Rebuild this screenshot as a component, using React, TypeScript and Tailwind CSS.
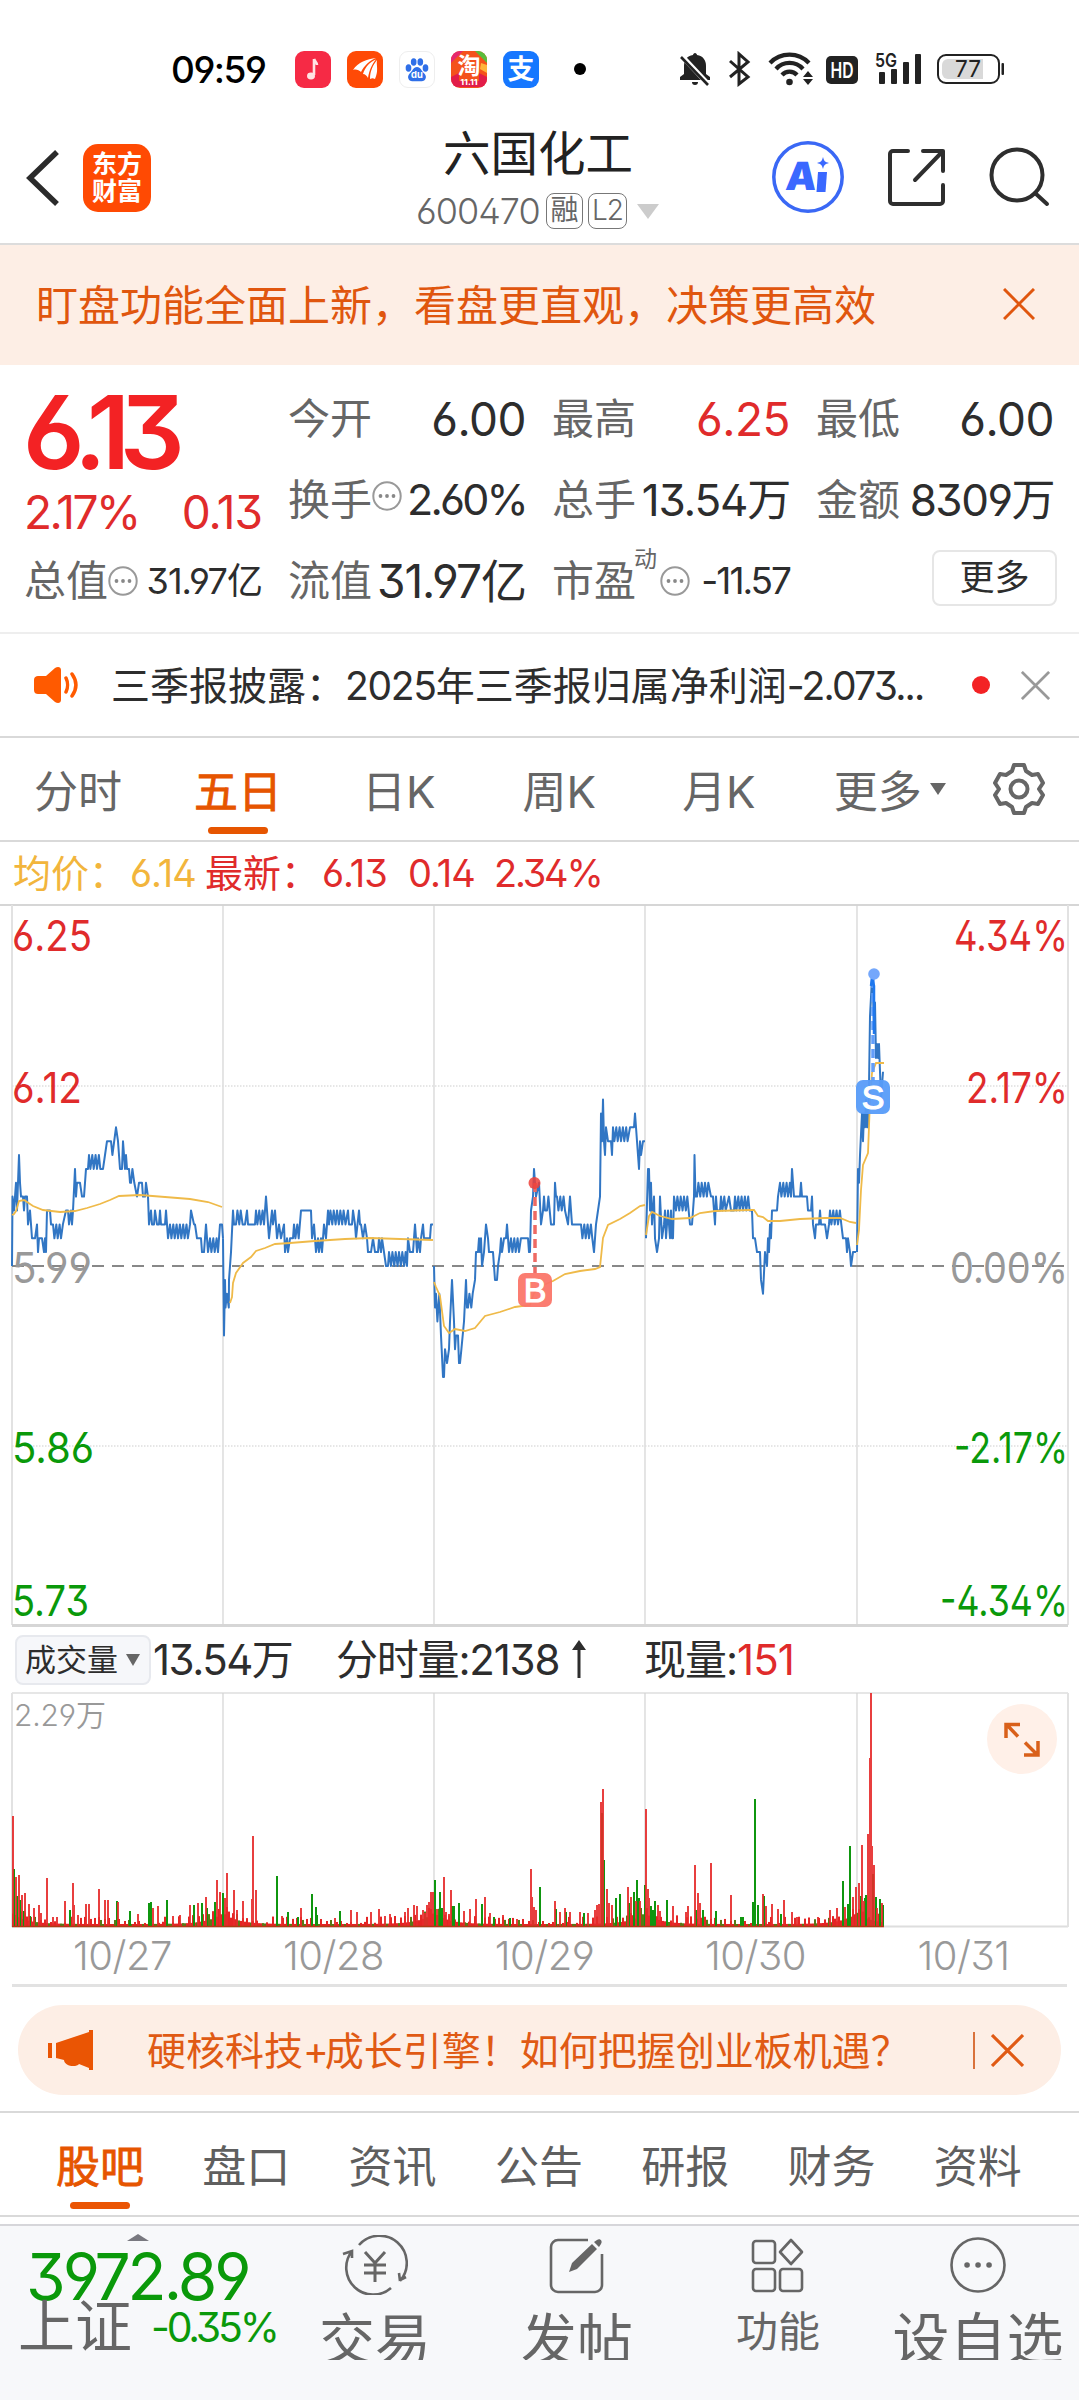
import type { ReactNode } from "react";

type Point = [number, number];

const PRICE_BASE = 362;
const TICK = 13.87;

// flips between two price ticks for every sample in [from, to]
function swing(from: number, to: number, a: number, b: number): Point[] {
  const points: Point[] = [];
  let high = false;
  for (let x = from; x <= to; x += high ? 1.4 : 1.9) {
    points.push([x, high ? b : a]);
    high = !high;
  }
  return points;
}

const priceDays: Point[][] = [
  [
    [12, 0], [12.5, 5], [14, 4], [15, 5], [16, 6], [17, 4], [18, 6], [19, 8], [20, 6], [21, 5], [23, 5], [24, 4], [25, 5], [27, 5], [28, 3], [30, 4], [32, 2], [35, 2], [37, 3], [38, 1], [39, 2], [42, 2], [44, 1], [45, 2], [46, 1], [47, 4], [50, 4], [51, 3],
    ...swing(53, 64, 3, 2),
    [66, 4], [68, 4], [69, 3], [71, 4], [72, 3], [73, 4], [75, 7], [76, 5], [77, 6], [80, 6], [82, 5], [84, 5], [86, 7], [88, 7],
    ...swing(89, 101, 8, 7),
    [103, 7], [105, 8], [107, 9], [110, 9],
    ...swing(111, 114, 9, 8),
    [116, 10], [118, 9], [120, 7], [122, 7], [123, 9], [125, 7], [126, 8], [127, 7], [129, 7], [130, 6],
    ...swing(131, 135, 6, 7),
    [137, 5], [139, 6], [142, 6], [143, 5], [145, 5], [146, 6], [148, 5], [149, 3], [151, 4], [152, 3], [154, 3], [155, 4], [157, 3], [159, 3], [160, 4], [161, 3], [165, 3], [166, 4], [168, 2],
    ...swing(170, 188, 3, 2),
    [190, 3], [191, 4], [194, 3], [195, 3], [197, 2], [201, 2], [202, 1], [204, 1], [206, 3], [208, 1],
    ...swing(210, 219, 2, 1),
    [220, 3], [222, 3], [223, 2],
  ],
  [
    [223, 2], [224, -5], [225, -1],
    ...swing(225.5, 229, -3, -2),
    [229, -1], [230, 0], [231, 1], [233, 4], [234, 3],
    ...swing(236, 243, 3, 4),
    [245, 3], [247, 4], [248, 3], [255, 3],
    ...swing(256, 264, 4, 3),
    [266, 5], [268, 3], [269, 2], [272, 4], [273, 3], [275, 4], [277, 2], [279, 3], [281, 2], [284, 3], [285, 1], [287, 2], [288, 1], [290, 2], [293, 2],
    ...swing(294, 299, 3, 2),
    [301, 4], [311, 4], [312, 2], [314, 3], [316, 1], [318, 2], [319, 1], [321, 2], [322, 1], [324, 3], [326, 2], [328, 4],
    ...swing(329, 346, 3, 4),
    [348, 4], [349, 3], [352, 3], [353, 4], [355, 3], [356, 2], [359, 4], [360, 3], [361, 3], [363, 2], [365, 3], [367, 2], [368, 1], [371, 1], [373, 2], [375, 1], [378, 1], [379, 2], [381, 1], [382, 2], [384, 1], [386, 0], [388, 0], [389, 1],
    ...swing(391, 406, 0, 1),
    [407, 0], [408, 2], [410, 1], [413, 1], [415, 3], [417, 1], [418, 2], [420, 1], [421, 2], [423, 3], [424, 2], [430, 2], [431, 3], [433, 3],
  ],
  [
    [434, 0], [435, -3],
    ...swing(436, 440, -2, -4),
    [441, -5], [443, -8], [444, -8], [445, -6], [447, -7], [449, -6], [450, -4], [452, -1], [454, -4], [455, -6], [456, -5], [458, -5], [459, -7],
    ...swing(460, 463, -7, -6),
    [464, -4], [466, -1], [467, -3],
    ...swing(468, 474, -3, -2),
    [475, -1], [476, 1], [478, 1], [479, 2], [480, 1], [481, 2], [482, 0], [484, 1], [486, 3], [488, 2], [489, 1], [493, 1], [495, -1], [497, -1], [498, 0], [500, 1], [501, 2], [502, 1], [504, 2], [506, 2], [507, 3], [509, 1],
    ...swing(511, 522, 2, 1),
    [528, 2], [529, 1], [530, 1], [531, 4], [533, 5], [534, 7], [536, 5], [539, 6], [541, 3], [543, 4], [544, 5], [545, 4],
    ...swing(547, 550, 4, 5),
    [551, 3], [554, 3], [555, 6], [556, 5],
    ...swing(557, 566, 5, 4),
    [568, 3], [570, 5], [572, 3], [580, 3],
    ...swing(581, 593, 3, 2),
    [594, 1], [596, 3], [598, 4], [600, 5], [601, 11], [602, 9], [603, 12], [604, 9], [605, 8], [606, 10], [608, 9], [611, 9], [612, 8],
    ...swing(613, 629, 10, 9),
    [630, 10], [634, 10], [635, 11], [636, 10], [637, 9], [639, 7], [640, 9], [641, 8], [643, 9], [645, 9],
  ],
  [
    [646, 2], [648, 7], [649, 7], [650, 4], [651, 6], [652, 3], [654, 5], [655, 2], [657, 1], [659, 2], [660, 5], [662, 2], [664, 3], [665, 4], [666, 2], [668, 4], [669, 3], [670, 2], [671, 4], [672, 2], [673, 2], [674, 5],
    ...swing(676, 688, 4, 5),
    [690, 3], [692, 3], [693, 4], [694, 5], [694.5, 8], [695.5, 5],
    ...swing(697, 710, 5, 6),
    [711, 5], [713, 5], [715, 3], [716, 5], [717, 4], [720, 4],
    ...swing(721, 727, 5, 4),
    [729, 5], [731, 4], [734, 4],
    ...swing(735, 750, 5, 4),
    [752, 4], [753, 2], [755, 2], [757, 1], [760, 1], [761, -1], [763, -2], [765, 1], [767, 0], [768, 2], [769, 1], [770, 3], [771, 2], [772, 4], [777, 4], [778, 5],
    ...swing(780, 790, 6, 5),
    [791, 5], [792, 7], [794, 5], [800, 5], [801, 6], [802, 5], [807, 5], [808, 4], [811, 4], [812, 5], [813, 3], [815, 2], [816, 3], [819, 3], [820, 4], [821, 3], [825, 3], [827, 2], [829, 3],
    ...swing(830, 842, 4, 3),
    [843, 2], [846, 2], [847, 1], [848, 2], [850, 1], [851, 0], [853, 1], [856, 1],
  ],
  [
    [857, 1], [858, 7], [859, 6], [860, 8], [862, 11], [863, 9], [864, 11], [865, 10], [866, 12], [867, 10], [868, 10], [869, 13], [870, 18], [872, 20.8], [873, 20], [874, 17], [875, 19], [876, 15], [877, 16], [878, 15], [879, 16], [880, 14], [881, 12], [882, 13], [883, 14],
  ],
];

const averageLines = [
  "12,1215 14,1214 16,1211 19,1201 24,1200 33,1206 43,1210 60,1212 75,1211 87,1208 100,1204 110,1200 119,1196 140,1195 165,1197 190,1199 208,1202 222,1207",
  "230,1303 232,1297 233,1283 236,1273 243,1263 251,1257 256,1251 265,1248 275,1244 290,1243 315,1241 345,1239 370,1238 400,1239 433,1240",
  "434,1282 436,1287 440,1296 444,1326 449,1333 455,1329 465,1331 475,1328 485,1316 500,1312 515,1307 530,1305 534,1293 540,1287 548,1283 553,1281 565,1274 580,1271 595,1269 600,1267 603,1238 608,1225 620,1219 630,1213 640,1206 645,1205",
  "646,1235 649,1216 652,1212 660,1216 672,1219 690,1218 700,1213 715,1211 750,1210 754,1210 758,1216 763,1217 768,1221 780,1221 800,1219 825,1218 840,1218 850,1222 856,1223",
  "857,1245 859,1230 861,1190 863,1165 868,1153 870,1100 872,1073 876,1063 884,1063",
];

const upBars: Point[] = [
  [13, 110], [16, 49], [19, 51], [22, 31], [25, 33], [29, 22], [34, 18], [39, 21], [41, 13], [47, 48], [53, 9], [57, 9], [65, 25], [73, 43], [74, 21], [78, 11], [86, 22], [89, 22], [99, 37], [105, 26], [108, 26], [118, 24], [138, 12], [153, 18], [158, 20], [173, 10], [180, 11], [190, 21], [198, 23], [206, 29], [217, 46], [220, 34], [225, 28], [227, 53], [234, 36], [237, 16], [243, 25], [252, 27], [253, 90], [256, 36], [282, 10], [301, 18], [335, 8], [351, 16], [357, 14], [371, 14], [379, 17], [385, 10], [390, 12], [405, 14], [408, 18], [414, 21], [417, 20], [423, 16], [425, 13], [427, 21], [429, 24], [431, 34], [433, 34], [437, 17], [444, 49], [446, 14], [449, 12], [451, 36], [464, 15], [470, 17], [476, 27], [485, 29], [490, 13], [503, 11], [517, 7], [531, 57], [532, 29], [534, 19], [536, 16], [555, 25], [560, 14], [565, 18], [570, 14], [580, 14], [588, 13], [595, 16], [597, 21], [599, 22], [601, 124], [603, 137], [607, 37], [609, 23], [612, 21], [628, 39], [631, 29], [636, 25], [640, 25], [646, 117], [648, 37], [649, 28], [658, 21], [660, 15], [673, 20], [686, 14], [688, 20], [695, 61], [698, 33], [700, 23], [711, 63], [731, 31], [763, 32], [766, 20], [772, 22], [778, 17], [784, 26], [792, 14], [797, 9], [809, 7], [818, 9], [830, 16], [837, 18], [845, 19], [853, 29], [856, 39], [859, 43], [862, 81], [864, 25], [868, 92], [870, 168], [871, 233], [872, 80], [874, 61], [877, 18], [882, 23],
];

const downBars: Point[] = [
  [14, 57], [17, 30], [20, 26], [24, 15], [30, 10], [70, 16], [117, 25], [130, 15], [149, 23], [151, 24], [167, 26], [194, 21], [202, 23], [207, 18], [215, 24], [223, 33], [277, 50], [288, 14], [298, 9], [312, 32], [316, 19], [317, 11], [340, 15], [435, 46], [440, 34], [442, 18], [452, 20], [454, 20], [459, 23], [482, 22], [494, 9], [510, 8], [540, 39], [556, 17], [566, 14], [584, 13], [602, 113], [604, 66], [616, 28], [620, 32], [629, 23], [634, 34], [637, 46], [639, 28], [645, 41], [651, 20], [653, 16], [655, 25], [667, 26], [696, 16], [703, 16], [716, 15], [741, 9], [743, 9], [753, 24], [755, 127], [758, 21], [764, 30], [781, 12], [843, 45], [848, 22], [850, 80], [861, 30], [865, 28], [866, 31], [873, 52], [876, 29], [880, 27], [883, 21],
];

const gridX = [223, 434, 645, 857];

// small trades between the big bars, busier around every open and close
const minorBars = Array.from({ length: 435 }, (_, i) => {
  const x = 13 + i * 2;
  const n = (i * 7919 + 13) % 101;
  const edge = Math.min(...[12, ...gridX].map((g) => Math.abs(g - x)));
  const boost = 16 * Math.exp(-edge / 14);
  const h = n > 55 ? 2 + ((n * 5) % 8) + boost : 2 + boost * 0.7;
  return { x, h, down: n % 4 === 0 };
});

const quoteTabs = [
  { label: "分时", left: "ml-[34px]" },
  { label: "五日", left: "ml-[72px]", active: true },
  { label: "日K", left: "ml-[80px]" },
  { label: "周K", left: "ml-[87px]" },
  { label: "月K", left: "ml-[86px]" },
];

const infoTabs = ["股吧", "盘口", "资讯", "公告", "研报", "财务", "资料"];

function Cross({ className }: { className: string }) {
  return (
    <svg viewBox="0 0 32 32" fill="none" stroke="currentColor" className={className}>
      <path d="M1 1L31 31M31 1L1 31" strokeWidth="3" />
    </svg>
  );
}

function MoreDots({ className = "" }: { className?: string }) {
  return (
    <svg viewBox="0 0 30 30" className={`size-[30px] shrink-0 ${className}`}>
      <circle cx="15" cy="15" r="13.7" fill="none" stroke="#999" strokeWidth="2" />
      <circle cx="8.5" cy="15" r="1.9" fill="#888" />
      <circle cx="15" cy="15" r="1.9" fill="#888" />
      <circle cx="21.5" cy="15" r="1.9" fill="#888" />
    </svg>
  );
}

function AppIcon({ className, children }: { className: string; children: ReactNode }) {
  return (
    <div className={`w-9 h-[37px] rounded-[9px] overflow-hidden flex items-center justify-center ${className}`}>
      {children}
    </div>
  );
}

function StatusBar() {
  return (
    <div className="h-[138px] flex items-center">
      <span className="ml-[171px] w-[96px] text-[37px] font-[450] tracking-[-1.5px] text-black">09:59</span>
      <div className="ml-[28px] flex gap-4">
        <AppIcon className="bg-[#f62a45]">
          <svg viewBox="0 0 36 36" className="size-9">
            <path d="M19 8c1 3 3 3 3 6M19 8v16" fill="none" stroke="#ffe3e3" strokeWidth="2.6" />
            <ellipse cx="16" cy="25" rx="4" ry="3.4" fill="#ffe3e3" />
          </svg>
        </AppIcon>
        <AppIcon className="bg-[#ff4a06]">
          <svg viewBox="0 0 36 36" className="size-9" fill="#fff">
            <path d="M6 19C11 11 20 8 29 7C23 9 17 15 14 21C12 19 9 18 6 19Z" />
            <path d="M16 23C18 16 23 11 29 8.500C25 13 22 20 21 27C20 25 18 23 16 23Z" />
            <path d="M23 28C23 20 26 14 30 9C29 14 32 19 28 28C26 27 25 27 23 28Z" />
          </svg>
        </AppIcon>
        <AppIcon className="bg-white border border-[#eee]">
          <svg viewBox="0 0 36 36" className="size-9" fill="#2f6fe8">
            <ellipse cx="9" cy="17" rx="3" ry="4" />
            <ellipse cx="14.500" cy="10.500" rx="3" ry="4" />
            <ellipse cx="21.500" cy="10.500" rx="3" ry="4" />
            <ellipse cx="27" cy="17" rx="3" ry="4" />
            <path d="M18 16c4 0 5 5 8 7c3 3 1 8-3 8H13c-4 0-6-5-3-8c3-2 4-7 8-7z" />
            <text x="18" y="28" textAnchor="middle" fontSize="10" fontWeight="700" fill="#fff">du</text>
          </svg>
        </AppIcon>
        <AppIcon className="bg-[#f4521c]">
          <svg viewBox="0 0 36 36" className="size-9">
            <path d="M0 0h12L0 12z" fill="#e5286e" />
            <path d="M24 0h12v12z" fill="#58bd3c" />
            <path d="M0 26l8-4v8h20v-8l8 4v10H0z" fill="#e21d49" />
            <path d="M30 12l6 2v8l-7-4z" fill="#ffb43c" />
            <text x="18" y="23" textAnchor="middle" fontSize="23" fontWeight="700" fill="#fff">淘</text>
            <text x="18" y="34" textAnchor="middle" fontSize="8" fontWeight="800" fill="#fff" textLength="17">11.11</text>
          </svg>
        </AppIcon>
        <AppIcon className="bg-[#1677ff]">
          <span className="text-[27px] leading-none font-bold text-white">支</span>
        </AppIcon>
      </div>
      <div className="ml-[35px] size-3 rounded-full bg-black" />
      <svg viewBox="0 0 330 36" className="ml-[94px] w-[330px] h-9" fill="#222">
        <g>
          <path d="M15 2c1 0 2 1 2 2c6 1 9 5 9 11v8l4 3v3H0v-3l4-3v-8c0-6 3-10 9-11c0-1 1-2 2-2z" />
          <path d="M12 31h6c0 2-1 3-3 3s-3-1-3-3z" />
          <path d="M-1 2L29 34" stroke="#fff" strokeWidth="5" />
          <path d="M1 6L28 34" stroke="#222" strokeWidth="2.600" />
        </g>
        <path d="M50 10L68 26L59 33V3L68 11L50 26" fill="none" stroke="#222" strokeWidth="3" />
        <g fill="none" stroke="#222" strokeWidth="4.200">
          <path d="M90 12a27 27 0 0 1 39 0" />
          <path d="M96 18a18 18 0 0 1 27 0" />
          <path d="M102 24a10 10 0 0 1 15 0" />
        </g>
        <circle cx="109.500" cy="31" r="3.300" />
        <path d="M123 26l5-6l5 6zM123 28h10l-5 6z" />
        <rect x="146" y="5" width="32" height="28" rx="5" />
        <text x="162" y="26.500" textAnchor="middle" fontSize="21" fontWeight="600" fill="#fff" textLength="23" lengthAdjust="spacingAndGlyphs">HD</text>
        <text x="195" y="15.500" fontSize="19" fontWeight="600" textLength="22" lengthAdjust="spacingAndGlyphs">5G</text>
        <rect x="199" y="21" width="6" height="12" rx="1" />
        <rect x="211" y="18" width="6" height="15" rx="1" />
        <rect x="223" y="11" width="6" height="22" rx="1" />
        <rect x="235" y="3" width="6" height="30" rx="1" />
        <rect x="258" y="4" width="61" height="28" rx="8" fill="#fff" stroke="#222" strokeWidth="2" />
        <path d="M268 8h35v20h-35a6 6 0 0 1-6-6v-8a6 6 0 0 1 6-6z" fill="#d9d9d9" />
        <rect x="321.500" y="12" width="2.500" height="12" rx="1" />
        <text x="288" y="26" textAnchor="middle" fontSize="23" textLength="26" lengthAdjust="spacingAndGlyphs">77</text>
      </svg>
    </div>
  );
}

function Header() {
  return (
    <header className="h-[107px] border-b-2 border-[#dcdcdc] flex items-start text-[#222]">
      <svg viewBox="0 0 34 58" className="mt-[11px] ml-[26px] w-[34px] h-[58px]" fill="none" stroke="#2b2b2b" strokeWidth="5.500">
        <path d="M31 3L4 29L31 55" />
      </svg>
      <div className="mt-[6px] ml-[23px] size-[68px] rounded-[15px] bg-[#ff4a03] text-white text-[25px] leading-[27px] font-bold text-center pt-[7px]">
        <div>东方</div>
        <div>财富</div>
      </div>
      <div className="-mt-[10px] ml-[201px] w-[368px] flex flex-col items-center">
        <div className="-mr-1 text-[47.500px] leading-[52px]">六国化工</div>
        <div className="mt-[13px] mr-[-3px] flex items-center h-9 text-[#666]">
          <span className="w-[124px] text-[36px] leading-9 tracking-[-1px] font-[350]">600470</span>
          <span className="ml-[6px] w-[37px] h-9 rounded-[8px] border-[1.500px] border-[#777] text-[28px] leading-[32px] text-center">融</span>
          <span className="ml-[5px] w-[39px] h-9 rounded-[8px] border-[1.500px] border-[#777] text-[28px] leading-[33px] text-center font-[350] tracking-[-1px]">L2</span>
          <svg viewBox="0 0 22 15" className="ml-[10px] w-[22px] h-[15px]">
            <path d="M0 0h22L11 15z" fill="#ccc" />
          </svg>
        </div>
      </div>
      <svg viewBox="0 0 72 72" className="mt-[3px] ml-[52px] size-[72px]">
        <circle cx="36" cy="36" r="34.200" fill="none" stroke="#3a68f5" strokeWidth="3.500" />
        <text x="13" y="49" fontSize="39" fontWeight="900" fill="#3a68ff" transform="skewX(-5) translate(4 0)">A</text>
        <path d="M46 31h9l-1.500 20h-9z" fill="#3a68ff" />
        <path d="M51 16c1 4 2 5 6 6c-4 1-5 2-6 6c-1-4-2-5-6-6c4-1 5-2 6-6z" fill="#3a68ff" />
      </svg>
      <svg viewBox="0 0 60 60" className="mt-[9px] ml-[42px] size-[60px]" fill="none" stroke="#2e2e2e" strokeWidth="4" strokeLinecap="round" strokeLinejoin="round">
        <path d="M22 4H7a3 3 0 0 0-3 3V54a3 3 0 0 0 3 3H54a3 3 0 0 0 3-3V38M37 4H57V24M57 4L29 33" />
      </svg>
      <svg viewBox="0 0 62 62" className="mt-[9px] ml-[43px] size-[62px]" fill="none" stroke="#2e2e2e" strokeWidth="4" strokeLinecap="round">
        <circle cx="28" cy="28" r="25.500" />
        <path d="M46 46L58 57" />
      </svg>
    </header>
  );
}

function Cell({ label, value, icon, valueClass = "text-[46px] tracking-[-0.5px]" }: { label: string; value: string; icon?: ReactNode; valueClass?: string }) {
  return (
    <div className="w-[238px] h-[81px] flex items-center whitespace-nowrap">
      <span className="text-[42px] text-[#666] w-[84px] shrink-0">{label}</span>
      {icon}
      <span className={`ml-auto font-[370] ${valueClass.includes("text-[#") ? "" : "text-[#2d2d2d]"} ${valueClass}`}>{value}</span>
    </div>
  );
}

function Quote() {
  return (
    <section className="h-[269px] border-b-2 border-[#eee] pl-[24px] pt-[13px] flex gap-[26px]">
      <div className="w-[238px] text-[#e02b2b]">
        <div className="-ml-[1px] h-[86px] pt-[2px] text-[102px] leading-[104px] font-semibold tracking-[-10.500px] text-[#f32224]">6.13</div>
        <div className="h-[76px] pt-[20px] flex justify-between items-center text-[46px] font-[370]">
          <span className="tracking-[-2.500px]">2.17%</span>
          <span className="tracking-[-1px]">0.13</span>
        </div>
        <Cell label="总值" value="31.97亿" icon={<MoreDots />} valueClass="text-[36px] tracking-[-1px]" />
      </div>
      <div>
        <Cell label="今开" value="6.00" />
        <Cell label="换手" value="2.60%" icon={<MoreDots className="-mt-2" />} valueClass="text-[43px] tracking-[-2.800px]" />
        <Cell label="流值" value="31.97亿" valueClass="text-[46px] tracking-[-1px]" />
      </div>
      <div>
        <Cell label="最高" value="6.25" valueClass="text-[46px] tracking-[-0.500px] text-[#e02b2b]" />
        <Cell label="总手" value="13.54万" valueClass="text-[44px] tracking-[-1.200px]" />
        <Cell
          label="市盈"
          value="-11.57"
          valueClass="text-[37px] tracking-[-2px]"
          icon={
            <>
              <span className="-ml-[2px] -mt-[42px] w-[26px] text-[23px] text-[#666]">动</span>
              <MoreDots />
            </>
          }
        />
      </div>
      <div>
        <Cell label="最低" value="6.00" />
        <Cell label="金额" value="8309万" valueClass="text-[44px] tracking-[-1.500px]" />
        <div className="w-[241px] h-[81px] flex items-center justify-end">
          <div className="-mt-[6px] w-[125px] h-[56px] rounded-[8px] border-2 border-[#e6e6e6] text-[35px] leading-[50px] text-center text-[#2d2d2d]">更多</div>
        </div>
      </div>
    </section>
  );
}

function News() {
  return (
    <div className="h-[104px] border-b-2 border-[#d9d9d9] flex items-center whitespace-nowrap">
      <svg viewBox="0 0 46 38" className="ml-[33px] w-[46px] h-[38px]" fill="none" stroke="#ff5a00" strokeWidth="3.500" strokeLinecap="round">
        <path d="M5 10h8L22 2c3-2 6-1 6 2V34c0 3-3 4-6 2L13 28H5c-2 0-4-1-4-4V14c0-3 2-4 4-4z" fill="#ff5a00" stroke="none" />
        <path d="M33 12c2 4 2 10 0 14M39 8c5 7 5 15 0 22" />
      </svg>
      <span className="ml-[32px] w-[810px] text-[39px] text-[#2d2d2d]">
        三季报披露：<span className="tracking-[-1.300px]">2025</span>年三季报归属净利润
        <span className="tracking-[-1.800px]">-2.073...</span>
      </span>
      <span className="ml-[51px] size-[18px] rounded-full bg-[#f32224]" />
      <Cross className="ml-[31px] size-[29px] text-[#999]" />
    </div>
  );
}

function QuoteTabs() {
  return (
    <nav className="h-[104px] border-b-2 border-[#d9d9d9] flex items-start text-[44px] leading-[108px] text-[#666] whitespace-nowrap">
      {quoteTabs.map((tab) => (
        <div key={tab.label} className={tab.left}>
          {tab.active ? (
            <div className="flex flex-col items-center w-[88px] text-[#e65500] [-webkit-text-stroke:0.8px_#e65500]">
              <span>{tab.label}</span>
              <span className="-mt-[19px] h-[7px] w-[60px] rounded-full bg-[#e65500]" />
            </div>
          ) : (
            tab.label
          )}
        </div>
      ))}
      <span className="ml-[78px]">更多</span>
      <svg viewBox="0 0 16 12" className="mt-[45px] ml-[8px] w-4 h-3">
        <path d="M0 0h16L8 12z" fill="#666" />
      </svg>
      <svg viewBox="0 0 54 54" className="mt-[24px] ml-[46px] size-[54px]" fill="none" stroke="#666" strokeWidth="4" strokeLinejoin="round">
        <path d="M22 3h10l2 6l6 4l6-1l5 9l-4 6l4 6l-5 9l-6-1l-6 4l-2 6H22l-2-6l-6-4l-6 1l-5-9l4-6l-4-6l5-9l6 1l6-4z" />
        <circle cx="27" cy="27" r="8.500" />
      </svg>
    </nav>
  );
}

function AxisLabel({ y, left, right, color, lw, rw }: { y: number; left: string; right: string; color: string; lw: number; rw: number }) {
  return (
    <g fill={color} fontSize="42" fontWeight="370">
      <text x="12" y={y} textLength={lw} lengthAdjust="spacingAndGlyphs">{left}</text>
      <text x={1068 - rw} y={y} textLength={rw} lengthAdjust="spacingAndGlyphs">{right}</text>
    </g>
  );
}

function PriceChart() {
  return (
    <svg viewBox="0 0 1079 723" className="block w-[1079px] h-[723px]">
      <path d="M0 1H1079" stroke="#d6d6d6" strokeWidth="2" />
      <path d="M12 1V721M1068 1V721" stroke="#e2e2e2" strokeWidth="2" />
      <path d="M12 721.500H1068" stroke="#d6d6d6" strokeWidth="3" />
      {gridX.map((x) => (
        <path key={x} d={`M${x} 1V720`} stroke="#d3d3d3" strokeWidth="1.200" />
      ))}
      <path d="M12 182H1068M12 542H1068" stroke="#dedede" strokeWidth="1.500" strokeDasharray="1.500 1.500" />
      <path d="M12 362H1068" stroke="#888" strokeWidth="2" strokeDasharray="12 8" />
      {priceDays.map((day, i) => (
        <polyline key={i} points={day.map(([x, t]) => `${x},${(PRICE_BASE - t * TICK).toFixed(1)}`).join(" ")} fill="none" stroke="#3176c4" strokeWidth="2" strokeLinejoin="round" />
      ))}
      <g transform="translate(0 -904)" fill="none" stroke="#efba49" strokeWidth="1.800">
        {averageLines.map((points) => (
          <polyline key={points} points={points} />
        ))}
      </g>
      <AxisLabel y={47} left="6.25" right="4.34%" color="#e02b2b" lw={80} rw={114} />
      <AxisLabel y={199} left="6.12" right="2.17%" color="#e02b2b" lw={70} rw={102} />
      <AxisLabel y={379} left="5.99" right="0.00%" color="#999999" lw={80} rw={118} />
      <AxisLabel y={559} left="5.86" right="-2.17%" color="#0a990a" lw={82} rw={114} />
      <AxisLabel y={712} left="5.73" right="-4.34%" color="#0a990a" lw={77} rw={128} />
      <path d="M535 279V369" stroke="#ee6a63" strokeWidth="3.500" strokeDasharray="9 5" />
      <circle cx="534.500" cy="279" r="6" fill="#ee4038" fillOpacity="0.850" />
      <rect x="518" y="369" width="34" height="34" rx="7" fill="#fb7568" fillOpacity="0.940" />
      <path d="M873 75V177" stroke="#629efa" strokeWidth="3.500" strokeDasharray="9 5" />
      <path d="M871 82L872 74L874 82L874 130" stroke="#1f78ee" strokeWidth="2.500" fill="none" />
      <circle cx="874" cy="70" r="5.800" fill="#74a7fb" />
      <rect x="856" y="176" width="34" height="34" rx="7" fill="#579cf9" fillOpacity="0.950" />
      <g fontFamily="Liberation Sans" fontSize="34" stroke="#fff" strokeWidth="1.200" fill="#fff" textAnchor="middle">
        <text x="535" y="398">B</text>
        <text x="873" y="205">S</text>
      </g>
    </svg>
  );
}

function VolumeBar() {
  return (
    <div className="h-[65px] flex items-center whitespace-nowrap text-[42px] font-[370] text-[#2d2d2d]">
      <div className="ml-[15px] w-[136px] h-[50px] rounded-[8px] border-2 border-[#e7e9ee] bg-[#f6f7fa] flex items-center pl-[8px] text-[31px]">
        成交量
        <svg viewBox="0 0 14 12" className="ml-[8px] w-[14px] h-3">
          <path d="M0 0h14L7 12z" fill="#666" />
        </svg>
      </div>
      <span className="ml-[2px] w-[183px] tracking-[-1.500px]">13.54万</span>
      <span className="w-[224px] tracking-[-1.200px]">分时量:2138</span>
      <svg viewBox="0 0 16 40" className="ml-[11px] w-4 h-10">
        <path d="M8 0L15 10H9.500V38H6.500V10H1z" fill="#2d2d2d" />
      </svg>
      <span className="ml-[57px] tracking-[-1px]">
        现量:<span className="text-[#e02b2b]">151</span>
      </span>
    </div>
  );
}

function VolumeChart() {
  const bar = ([x, h]: Point) => `M${x} 234v-${h}`;
  return (
    <svg viewBox="0 0 1079 236" className="block w-[1079px] h-[236px]">
      <path d="M12 1H1068" stroke="#dedede" strokeWidth="1.500" />
      <path d="M12 234.500H1068" stroke="#dedede" strokeWidth="2" />
      <path d="M12 1V235M1068 1V235" stroke="#e2e2e2" strokeWidth="2" />
      {gridX.map((x) => (
        <path key={x} d={`M${x} 1V234`} stroke="#d3d3d3" strokeWidth="1.200" />
      ))}
      {minorBars.map(({ x, h, down }) => (
        <rect key={x} x={x - 1} y={234 - h} width="2" height={h} fill={down ? "#577a14" : "#e42424"} />
      ))}
      <path d={downBars.map(bar).join("")} stroke="#0f960f" strokeWidth="2" />
      <path d={upBars.map(bar).join("")} stroke="#e62a2a" strokeWidth="2" strokeOpacity="0.900" />
      <path d="M12 234.500H884" stroke="#b03a14" strokeWidth="1.500" />
      <text x="14" y="34" fontSize="30" fontWeight="350" fill="#999" textLength="92">2.29万</text>
      <circle cx="1022" cy="47" r="35" fill="#fff0e8" />
      <path d="M1006 46V32.500H1020M1007 33L1018 44.500M1038 49V63H1024M1037 62.500L1025 50.500" fill="none" stroke="#d9601a" strokeWidth="3.500" />
    </svg>
  );
}

function Dates() {
  return (
    <div className="mx-[12px] h-[59px] border-b-[3px] border-[#e2e2e2] grid grid-cols-5 items-center text-center text-[40px] font-[350] tracking-[-0.500px] text-[#999]">
      <span className="pl-[10px]">10/27</span>
      <span className="pl-[10px]">10/28</span>
      <span className="pl-[10px]">10/29</span>
      <span className="pl-[10px]">10/30</span>
      <span className="pl-[4px]">10/31</span>
    </div>
  );
}

function Promo() {
  return (
    <div className="pt-[18px] h-[126px] border-b-2 border-[#d9d9d9]">
      <div className="mx-[18px] h-[90px] rounded-full bg-[#fdeee5] flex items-center text-[#e05a14] whitespace-nowrap">
        <svg viewBox="0 0 46 40" className="ml-[30px] w-[46px] h-10" fill="#ea5504">
          <path d="M0 13h4v15H0zM8 13L41 2V0h4v40h-4v-2L31 34c-3 4-15 2-15-4L8 28z" />
        </svg>
        <span className="ml-[53px] w-[750px] text-[39px]">
          硬核科技<span className="tracking-[-4px]">+</span>成长引擎！如何把握创业板机遇？
        </span>
        <span className="ml-[76px] h-[37px] w-[1.500px] bg-[#d9723c]" />
        <Cross className="ml-[16px] size-[33px]" />
      </div>
    </div>
  );
}

function InfoTabs() {
  return (
    <nav className="h-[104px] mb-[7px] border-b-2 border-[#d9d9d9] pl-[56px] flex gap-[58.300px] text-[44px] leading-[108px] text-[#5f5f5f] whitespace-nowrap">
      {infoTabs.map((label, i) =>
        i === 0 ? (
          <div key={label} className="w-[88px] flex flex-col items-center text-[#e65500] [-webkit-text-stroke:0.8px_#e65500]">
            <span>{label}</span>
            <span className="-mt-[19px] h-[7px] w-[60px] rounded-full bg-[#ea5504]" />
          </div>
        ) : (
          <span key={label}>{label}</span>
        ),
      )}
    </nav>
  );
}

function NavItem({ label, className, labelClass, children }: { label: string; className: string; labelClass: string; children: ReactNode }) {
  return (
    <div className={`h-[134px] overflow-hidden flex flex-col items-center whitespace-nowrap ${className}`}>
      <svg viewBox="0 0 66 60" className="mt-[9px] w-[66px] h-[60px] shrink-0" fill="none" stroke="#666" strokeWidth="2.600">
        {children}
      </svg>
      <span className={labelClass}>{label}</span>
    </div>
  );
}

function BottomBar() {
  return (
    <footer className="h-[176px] border-t-2 border-[#d6d6da] bg-[#f7f8fa] flex text-[#666]">
      <div className="w-[290px] pt-[8px] flex flex-col whitespace-nowrap">
        <svg viewBox="0 0 22 7" className="ml-[127px] w-[22px] h-[7px]">
          <path d="M0 7h22L11 0z" fill="#78787f" />
        </svg>
        <div className="ml-[26px] mt-[6px] text-[64px] leading-[60px] font-[370] tracking-[-3px] text-[#0a990a]">3972.89</div>
        <div className="-mt-[10px] ml-[18px] flex items-center text-[57px] leading-[60px]">
          上证
          <span className="ml-[19px] -mt-[1px] text-[41px] font-[370] tracking-[-3.200px] text-[#0a990a]">-0.35%</span>
        </div>
      </div>
      <NavItem label="交易" className="ml-[14px] w-[142px]" labelClass="mt-[11px] text-[56px] leading-[68px]">
        <path d="M17 10a27 27 0 0 1 41 36M58 46l-1-8M58 45l6-3M49 53a27 27 0 0 1-39-37M1 19l9-3v7" />
        <path d="M23 17l10 11l10-11M33 28v19M22 30h22M22 38h22" strokeWidth="3" />
      </NavItem>
      <NavItem label="发帖" className="ml-[60px] w-[142px]" labelClass="mt-[11px] text-[56px] leading-[68px]">
        <path d="M44 5H14a7 7 0 0 0-7 7V50a7 7 0 0 0 7 7H51a7 7 0 0 0 7-7V19" />
        <path d="M25 37l3-9L48 9l5 5L33 34zM50 7l3-2c3-2 6 1 4 4l-2 3z" fill="#666" stroke="none" />
      </NavItem>
      <NavItem label="功能" className="ml-[59px] w-[142px]" labelClass="mt-[12px] text-[42px] leading-[50px]">
        <rect x="8" y="6" width="22" height="22" rx="3" />
        <rect x="8" y="34" width="22" height="22" rx="3" />
        <rect x="35" y="34" width="22" height="22" rx="3" />
        <path d="M46 5L57 17L46 29L35 17z" strokeLinejoin="round" />
      </NavItem>
      <NavItem label="设自选" className="ml-[38px] w-[182px]" labelClass="mt-[11px] text-[57px] leading-[68px]">
        <circle cx="33" cy="30" r="26.500" />
        <path d="M22 30h.1M33 30h.1M44 30h.1" strokeWidth="5.500" strokeLinecap="round" />
      </NavItem>
    </footer>
  );
}

export default function App() {
  return (
    <div className="w-[1079px] h-[2400px] overflow-hidden bg-white font-['Inter','Noto_Sans_CJK_SC',sans-serif] [font-feature-settings:'cv09','ss01'] leading-none">
      <StatusBar />
      <Header />
      <div className="h-[120px] bg-[#fdeee5] flex items-center text-[#e0560e] whitespace-nowrap">
        <span className="ml-[36px] mt-[2px] w-[840px] text-[42px]">盯盘功能全面上新，看盘更直观，决策更高效</span>
        <Cross className="ml-[127px] -mt-[2px] size-[32px]" />
      </div>
      <Quote />
      <News />
      <QuoteTabs />
      <div className="h-[62px] flex items-center whitespace-nowrap text-[38px] font-[370] tracking-[-1px] text-[#e02b2b]">
        <span className="ml-[13px] w-[117px] tracking-normal text-[#f2b53c]">均价：</span>
        <span className="w-[75px] text-[#f2b53c]">6.14</span>
        <span className="w-[117px] tracking-normal">最新：</span>
        <span className="w-[86px]">6.13</span>
        <span className="w-[86px]">0.14</span>
        <span className="tracking-[-2.200px]">2.34%</span>
      </div>
      <PriceChart />
      <VolumeBar />
      <VolumeChart />
      <Dates />
      <Promo />
      <InfoTabs />
      <BottomBar />
    </div>
  );
}
